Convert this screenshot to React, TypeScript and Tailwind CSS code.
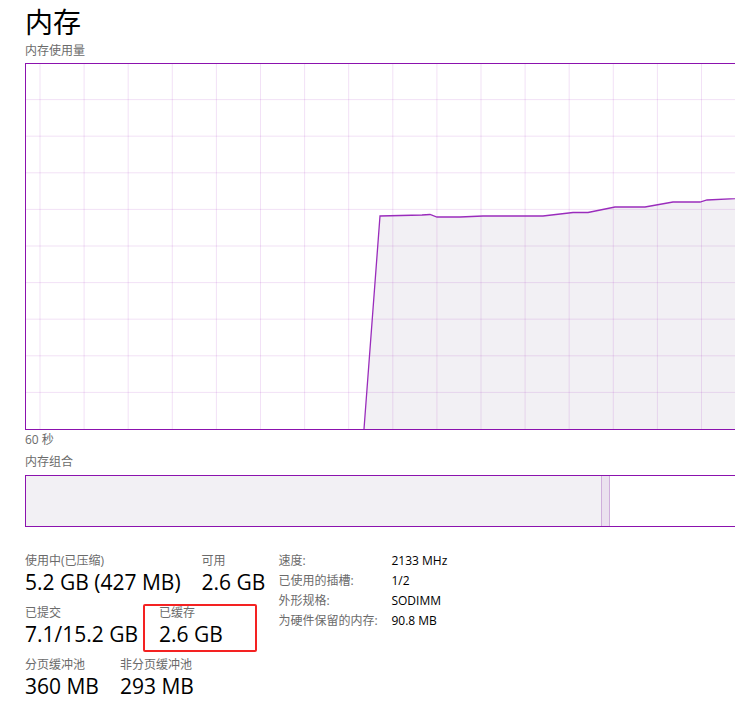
import React from "react";

const font = {
  fontFamily: '"Open Sans", "Noto Sans CJK SC", sans-serif',
};

// grid columns in chart-local coordinates (chart left border = 0)
const vLines = Array.from({ length: 17 }, (_, i) => 15 + i * 44.1);
const hLines = Array.from({ length: 9 }, (_, i) => 36.6 * (i + 1));

const points: [number, number][] = [
  [339, 366],
  [355, 153],
  [397, 152],
  [405, 151.5],
  [412, 154],
  [435, 154],
  [458, 153],
  [518, 153],
  [548, 149.5],
  [563, 149.5],
  [590, 144],
  [620, 144],
  [648, 139],
  [675, 139],
  [682, 137],
  [740, 134],
];

const MemoryChart = () => {
  const line = points.map((p) => p.join(",")).join(" ");
  const fill = `${line} 740,366`;
  return (
    <svg width="740" height="367" className="block">
      <rect x="0" y="0" width="740" height="367" fill="#ffffff" />
      <polygon points={fill} fill="#f2f0f4" />
      {vLines.map((x) => (
        <line key={x} x1={x} y1={0} x2={x} y2={367} stroke="#a02bbf" strokeOpacity="0.14" strokeWidth="1" />
      ))}
      {hLines.map((y) => (
        <line key={y} x1={0} y1={y} x2={740} y2={y} stroke="#a02bbf" strokeOpacity="0.14" strokeWidth="1" />
      ))}
      <polyline points={line} fill="none" stroke="#9a2cbc" strokeWidth="1.3" />
      <rect x="0.5" y="0.5" width="760" height="366" fill="none" stroke="#8b12ae" strokeWidth="1" />
    </svg>
  );
};

const Stat = ({ label, value, children }: { label: string; value: string; children?: React.ReactNode }) => (
  <div className="relative flex flex-col">
    <div className="text-[12px] leading-[16px] text-[#6b6b6b]">{label}</div>
    <div className="text-[21px] leading-[26px] text-black whitespace-nowrap">{value}</div>
    {children}
  </div>
);

const details = [
  ["速度:", "2133 MHz"],
  ["已使用的插槽:", "1/2"],
  ["外形规格:", "SODIMM"],
  ["为硬件保留的内存:", "90.8 MB"],
];

export default function App() {
  return (
    <div className="relative w-[735px] h-[714px] overflow-hidden bg-white pl-[25px]" style={font}>
      <div className="pt-[2px] text-[28px] leading-[40px] text-black">内存</div>
      <div className="mt-[1px] text-[12px] leading-[16px] text-[#6b6b6b]">内存使用量</div>
      <div className="mt-[4px] w-[760px]">
        <MemoryChart />
      </div>
      <div className="mt-[2px] text-[12px] leading-[16px] text-[#6b6b6b]">60 秒</div>
      <div className="mt-[6px] text-[12px] leading-[16px] text-[#6b6b6b]">内存组合</div>
      <div className="mt-[5px] flex h-[52px] w-[760px] border border-[#8b12ae]">
        <div className="w-[575px] bg-[#f2f0f4]" />
        <div className="w-[9px] border-x border-[#cfaedb] bg-[#ebe1ef]" />
        <div className="flex-1 bg-white" />
      </div>

      <div className="mt-[26px] flex gap-[13px]">
        <div className="flex flex-col gap-[10px]">
          <div className="flex gap-[21px]">
            <Stat label="使用中(已压缩)" value="5.2 GB (427 MB)" />
            <Stat label="可用" value="2.6 GB" />
          </div>
          <div className="flex gap-[21px]">
            <Stat label="已提交" value="7.1/15.2 GB" />
            <Stat label="已缓存" value="2.6 GB">
              <div className="absolute left-[-16px] top-[-1px] h-[48px] w-[114px] rounded-[2px] border-2 border-[#f42222]" />
            </Stat>
          </div>
          <div className="flex gap-[21px]">
            <Stat label="分页缓冲池" value="360 MB" />
            <Stat label="非分页缓冲池" value="293 MB" />
          </div>
        </div>
        <div className="-mt-[2px] flex flex-col">
          {details.map(([k, v]) => (
            <div key={k} className="flex text-[12px] leading-[20px]">
              <div className="w-[113px] text-[#6b6b6b]">{k}</div>
              <div className="text-black">{v}</div>
            </div>
          ))}
        </div>
      </div>
    </div>
  );
}
